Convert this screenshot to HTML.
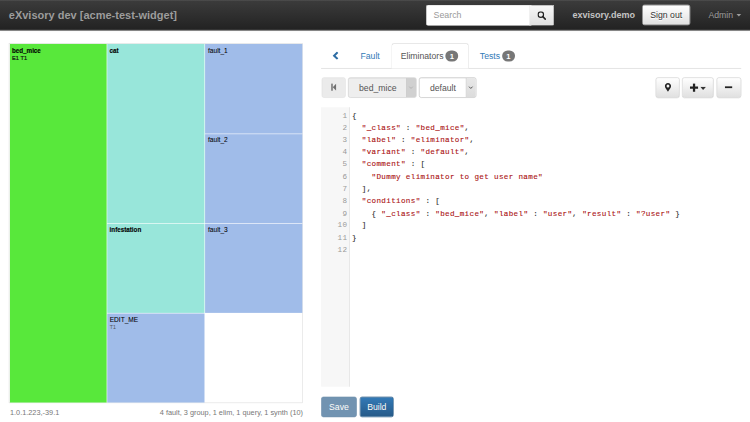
<!DOCTYPE html>
<html lang="en">
<head>
<meta charset="utf-8">
<title>eXvisory dev [acme-test-widget]</title>
<style>
*{box-sizing:border-box}
html,body{margin:0;padding:0;background:#fff;overflow:hidden;width:750px;height:422px}
body{font-family:"Liberation Sans",Arial,sans-serif;font-size:14.8px;line-height:20px;color:#333}
#stage{position:absolute;left:0;top:0;width:1280px;height:720px;transform:scale(0.5859375);transform-origin:0 0;background:#fff;overflow:hidden}
.abs{position:absolute}

/* navbar */
.navbar{position:absolute;left:0;top:0;width:1280px;height:51.5px;background:linear-gradient(to bottom,#3c3c3c 0,#222 100%);border-bottom:1px solid #080808;box-shadow:inset 0 1px 0 rgba(255,255,255,.15),0 1px 5px rgba(0,0,0,.075)}
.brand{position:absolute;left:15px;top:16.5px;font-size:18.8px;line-height:20px;font-weight:bold;color:#9d9d9d;text-shadow:0 -1px 0 rgba(0,0,0,.25);white-space:nowrap}
.search{position:absolute;left:727px;top:8px;width:180px;height:35.6px;background:#fff;border:1px solid #ccc;border-right:0;border-radius:4px 0 0 4px;padding:7px 12px;color:#999;font-size:15px;line-height:20px;box-shadow:inset 0 1px 1px rgba(0,0,0,.075)}
.searchbtn{position:absolute;left:902.5px;top:8px;width:43.5px;height:35.6px;border:1px solid #ccc;border-left:1px solid #ddd;border-radius:0 4px 4px 0;background:linear-gradient(to bottom,#f8f8f8 0,#e0e0e0 100%)}
.navtext{position:absolute;left:977px;top:16px;font-size:15.4px;font-weight:bold;color:#c4c4c4;white-space:nowrap}
.signout{position:absolute;left:1096px;top:8px;width:82px;height:35.4px;border:1px solid #ccc;border-radius:4px;background:linear-gradient(to bottom,#fff 0,#e0e0e0 100%);color:#333;text-align:center;line-height:20px;padding:7px 0;text-shadow:0 1px 0 #fff}
.admin{position:absolute;left:1209px;top:15px;color:#9d9d9d;text-shadow:0 -1px 0 rgba(0,0,0,.25);white-space:nowrap}
.caret{display:inline-block;width:0;height:0;margin-left:2px;vertical-align:middle;border-top:4px solid;border-right:4px solid transparent;border-left:4px solid transparent}

/* treemap */
.tm{position:absolute;left:15px;top:74px;width:501.8px;height:614.4px;border:1px solid #ddd;background:#fff}
.cell{position:absolute;overflow:hidden;-webkit-text-stroke:0.1px #000;padding:5.2px 4.2px 5px;font-size:11.2px;line-height:13px;color:#000}
.cell b{display:block;-webkit-text-stroke:0.2px #000;font-weight:bold;font-size:10.7px;margin-left:-0.3px}
.cell small{display:block;font-size:9px;line-height:11px;margin-top:1px;color:#555;-webkit-text-stroke:0}
.cell small.d{font-size:9.6px;color:#111;-webkit-text-stroke:0.3px #111}
.g{background:#58e83b}
.c{background:#98e6da}
.b{background:#a0bce9}
.foot{position:absolute;top:694.5px;font-size:12.5px;color:#777;white-space:nowrap}

/* tabs */
.tabs{position:absolute;left:548.33px;top:74px;width:716.67px;height:42.5px;border-bottom:1px solid #d0d0d0}
.tab{position:absolute;top:0;height:42.5px;padding:10px 15px;border:1px solid transparent;border-radius:4px 4px 0 0;color:#337ab7;white-space:nowrap}
.tab.active{color:#555;background:#fff;border-color:#d0d0d0;border-bottom-color:#fff}
.badge{display:inline-block;min-width:10px;padding:3px 7.4px;font-size:13px;font-weight:bold;line-height:13px;margin-left:-1px;color:#fff;text-align:center;vertical-align:middle;background:#777;border-radius:10px;position:relative;top:-1px}

/* toolbar */
.btn{position:absolute;top:132px;height:34.5px;border:1px solid #ccc;border-radius:4px;background:linear-gradient(to bottom,#fff 0,#e0e0e0 100%);box-shadow:inset 0 1px 0 rgba(255,255,255,.15),0 1px 1px rgba(0,0,0,.075)}
.btn.dis{background:#ebebeb;border-color:#e1e1e1;box-shadow:none}
.sel{position:absolute;top:132px;height:34.5px;border:1px solid #bbb;border-radius:4px;background:#fff;padding:6.5px 0 6px 17.7px;color:#555;overflow:hidden;box-shadow:inset 0 1px 1px rgba(0,0,0,.075)}
.sel i{position:absolute;right:0;top:0;bottom:0;width:17.3px;background:linear-gradient(to bottom,#e8e8e8,#dcdcdc);border-left:1px solid #c4c4c4}
.sel.dis{background:#eee;border-color:#ccc}
.sel.dis i{background:#d0d0d0;border-left-color:#ccc}

/* editor */
.cm{position:absolute;left:548.33px;top:183px;width:716.67px;height:477px;background:#fff;font-family:"Liberation Mono","Courier New",monospace;font-size:13px;letter-spacing:0.555px;line-height:20.85px;color:#333}
.gut{position:absolute;left:0;top:0;bottom:0;width:49px;background:#f7f7f7;border-right:1px solid #ddd}
.ln{position:absolute;left:0;width:44.5px;text-align:right;color:#999;top:0}
.ln div,.code div{height:20.85px;white-space:pre}
.code{position:absolute;left:52.4px;top:0;-webkit-text-stroke:0.18px currentColor}
.s{color:#a11}

.bbtn{position:absolute;top:676.5px;height:35px;border-radius:4px;color:#fff;padding:7.5px 0 0;text-align:center;text-shadow:0 -1px 0 rgba(0,0,0,.2);line-height:20px;border:1px solid #245580;background:linear-gradient(to bottom,#337ab7 0,#265a88 100%)}
</style>
</head>
<body>
<div id="stage">

<div class="navbar">
  <div class="brand">eXvisory dev [acme-test-widget]</div>
  <div class="search">Search</div>
  <div class="searchbtn">
    <svg class="abs" style="left:13px;top:9.5px" width="15" height="15" viewBox="0 0 15 15"><circle cx="6" cy="6" r="4.6" fill="none" stroke="#222" stroke-width="2"/><path d="M9.4 9.4 L13.6 13.6" stroke="#222" stroke-width="2.6" stroke-linecap="round"/></svg>
  </div>
  <div class="navtext">exvisory.demo</div>
  <div class="signout">Sign out</div>
  <div class="admin">Admin <span class="caret"></span></div>
</div>

<div class="tm">
  <div class="cell g" style="left:0.5px;top:0.0px;width:165.6px;height:611.9px"><b>bed_mice</b><small class="d">E1 T1</small></div>
  <div class="cell c" style="left:167.1px;top:0.0px;width:165.6px;height:305.7px"><b>cat</b></div>
  <div class="cell c" style="left:167.1px;top:306.7px;width:165.6px;height:152.1px;padding-top:4.6px"><b>infestation</b></div>
  <div class="cell b" style="left:167.1px;top:459.8px;width:165.6px;height:152.1px;padding-top:3.9px">EDIT_ME<small>T1</small></div>
  <div class="cell b" style="left:333.7px;top:0.0px;width:165.9px;height:152.6px;padding-left:5.4px">fault_1</div>
  <div class="cell b" style="left:333.7px;top:153.6px;width:165.9px;height:152.1px;padding-left:5.4px;padding-top:3.7px">fault_2</div>
  <div class="cell b" style="left:333.7px;top:306.7px;width:165.9px;height:152.1px;padding-left:5.4px;padding-top:4.6px">fault_3</div>
</div>
<div class="foot" style="left:17px">1.0.1.223,-39.1</div>
<div class="foot" style="right:762.9px">4 fault, 3 group, 1 elim, 1 query, 1 synth (10)</div>

<div class="tabs">
  <div class="tab" style="left:0;width:48px">
    <svg class="abs" style="left:18px;top:12.5px" width="12" height="14" viewBox="0 0 12 14"><path d="M9.2 1.3 L3.2 7 L9.2 12.7" fill="none" stroke="#2e6da4" stroke-width="3.4"/></svg>
  </div>
  <div class="tab" style="left:50.9px">Fault</div>
  <div class="tab active" style="left:119.5px;width:132.2px">Eliminators <span class="badge">1</span></div>
  <div class="tab" style="left:254.6px">Tests <span class="badge">1</span></div>
</div>

<div class="btn dis" style="left:548.8px;width:41px">
  <svg class="abs" style="left:15.2px;top:9.3px" width="9.2" height="13.4" viewBox="0 0 10 13" preserveAspectRatio="none"><rect x="0.3" y="0.5" width="2.8" height="12" fill="#707070"/><path d="M9.7 0.5 L3.2 6.5 L9.7 12.5 Z" fill="#707070"/></svg>
</div>
<div class="sel dis" style="left:594px;width:117px">bed_mice<i><svg class="abs" style="left:3.6px;top:13px" width="9" height="7.2" viewBox="0 0 10 8"><path d="M1.5 2 L5 5.5 L8.5 2" fill="none" stroke="#b0b0b0" stroke-width="1.7"/></svg></i></div>
<div class="sel" style="left:715px;width:98px">default<i><svg class="abs" style="left:3.6px;top:13px" width="9" height="7.2" viewBox="0 0 10 8"><path d="M1.5 2 L5 5.5 L8.5 2" fill="none" stroke="#444" stroke-width="1.7"/></svg></i></div>

<div class="btn" style="left:1119px;width:40.6px"><svg class="abs" style="left:14px;top:8px" width="12" height="16" viewBox="0 0 12 15" preserveAspectRatio="none"><path d="M6 0.5 C2.9 0.5 0.7 2.8 0.7 5.6 C0.7 8.6 4 11.5 6 14.5 C8 11.5 11.3 8.6 11.3 5.6 C11.3 2.8 9.1 0.5 6 0.5 Z M6 3.2 A2.4 2.4 0 1 1 6 8 A2.4 2.4 0 1 1 6 3.2 Z" fill="#222" fill-rule="evenodd"/></svg></div>
<div class="btn" style="left:1164.3px;width:53.4px"><svg class="abs" style="left:11.5px;top:9px" width="15" height="15" viewBox="0 0 14 14"><path d="M5.2 0.5 H8.8 V5.2 H13.5 V8.8 H8.8 V13.5 H5.2 V8.8 H0.5 V5.2 H5.2 Z" fill="#222"/></svg><svg class="abs" style="left:30px;top:15px" width="10" height="6" viewBox="0 0 10 6"><path d="M0 0 H10 L5 5.5 Z" fill="#333"/></svg></div>
<div class="btn" style="left:1222.8px;width:41.9px"><svg class="abs" style="left:13.4px;top:14px" width="13" height="4" viewBox="0 0 13 4"><rect x="0" y="0" width="13" height="3.6" fill="#222"/></svg></div>

<div class="cm">
  <div class="gut"></div>
  <div class="ln" style="top:4.9px"><div>1</div><div>2</div><div>3</div><div>4</div><div>5</div><div>6</div><div>7</div><div>8</div><div>9</div><div>10</div><div>11</div><div>12</div></div>
  <div class="code" style="top:4.9px"><div>{</div><div>  <span class="s">"_class"</span> : <span class="s">"bed_mice"</span>,</div><div>  <span class="s">"label"</span> : <span class="s">"eliminator"</span>,</div><div>  <span class="s">"variant"</span> : <span class="s">"default"</span>,</div><div>  <span class="s">"comment"</span> : [</div><div>    <span class="s">"Dummy eliminator to get user name"</span></div><div>  ],</div><div>  <span class="s">"conditions"</span> : [</div><div>    { <span class="s">"_class"</span> : <span class="s">"bed_mice"</span>, <span class="s">"label"</span> : <span class="s">"user"</span>, <span class="s">"result"</span> : <span class="s">"?user"</span> }</div><div>  ]</div><div>}</div><div> </div></div>
</div>

<div class="bbtn" style="left:548.33px;width:60.3px;opacity:.65;background:#265a88">Save</div>
<div class="bbtn" style="left:613.7px;width:58.7px">Build</div>

</div>
</body>
</html>
